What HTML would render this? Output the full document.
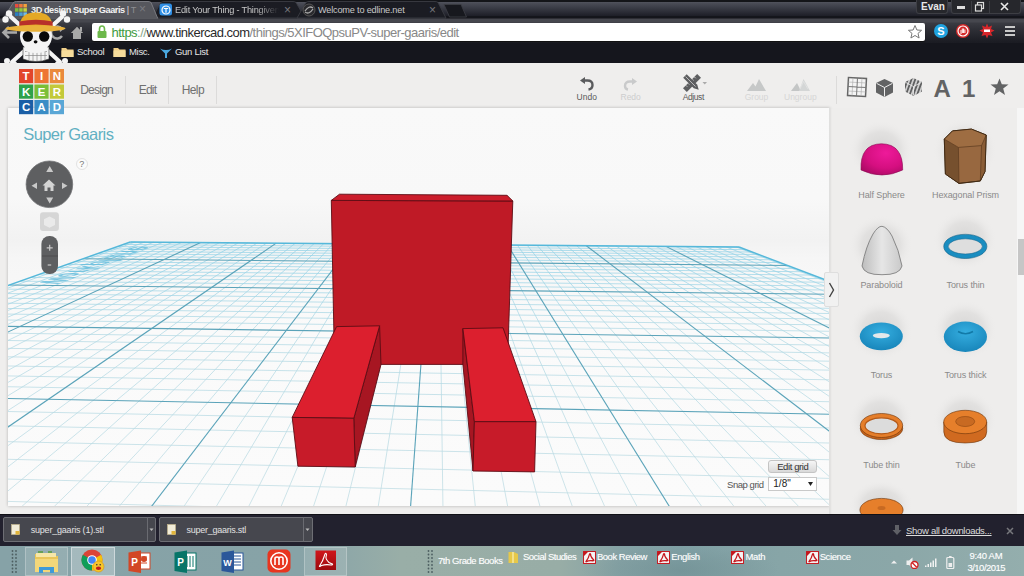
<!DOCTYPE html>
<html><head><meta charset="utf-8">
<style>
*{box-sizing:border-box;margin:0;padding:0}
html,body{width:1024px;height:576px;overflow:hidden;background:#1d1e24;font-family:"Liberation Sans",sans-serif}
.abs{position:absolute}
#tabs{left:0;top:0;width:1024px;height:18.5px;background:linear-gradient(#15161c 0,#15161c 1px,#5a5c66 1px,#4b4d57 3px,#393b45 8px,#1f2029 15.5px,#14151b 16.5px,#14151b 18.5px)}
#toolbar{left:0;top:18.5px;width:1024px;height:24.5px;background:linear-gradient(#46474e 0,#3c3d44 3px,#2d2e35 11px,#1e1f26 21px,#1a1b22 24.5px)}
#bm{left:0;top:43px;width:1024px;height:20px;background:#15161d}
#omni{left:92px;top:22.5px;width:833px;height:18.7px;background:#fff;border-radius:2px;box-shadow:0 1px 1px #111}
#tc{left:0;top:63px;width:1024px;height:450.5px;background:#efeeed}
#canvas{left:8px;top:108px;width:822px;height:398px;background:linear-gradient(#f9f9f9 0,#f8f8f8 90px,#f2f2f2 132px,#f6f6f6 150px,#fafafa 220px,#fbfbfb 398px);box-shadow:0 0 3px rgba(0,0,0,.25)}
#side{left:829px;top:108px;width:195px;height:405.5px;background:#eeedec;box-shadow:inset 3px 0 2px -1px rgba(0,0,0,.06)}
#dl{left:0;top:513.5px;width:1024px;height:32.5px;background:#22212e;border-top:1px solid #101016}
#task{left:0;top:545.7px;width:1024px;height:30.3px;background:linear-gradient(90deg,#86a2a7 0,#87a3a7 300px,#8fa8a8 350px,#99aea7 400px,#98ada6 560px,#85a2a5 620px,#7f9fa4 680px,#87a5a7 780px,#8ba7a8 900px,#94aead 1024px)}
svg{position:absolute;left:0;top:0}
.tt{font-size:9.2px;white-space:nowrap;letter-spacing:-0.2px}
.tx{font-size:12px}
.mn{top:82.5px;font-size:12px;color:#707070}
.sep{top:76px;width:1px;height:28px;background:#dcdbda}
.lb{top:91.5px;font-size:8.5px}
.sl{font-size:9px;color:#8a8a8a;text-align:center;letter-spacing:-0.1px}
.dli{top:517px;height:25px;background:#46474e;border:1px solid #6d6e74;border-radius:2px}
.dlt{top:524.5px;font-size:9px;color:#e2e2e2}
.tb{top:547px;height:29px;border:1px solid transparent}
.tk{font-size:9.5px;color:#fff;text-shadow:0 0 1px rgba(255,255,255,.4)}
.bt{font-size:9.5px;color:#e6e6e6;letter-spacing:-0.3px}
.m{stroke-width:0.75}
.M{stroke:#5aa3b9;stroke-width:1.1}
.E{stroke:#55b8da;stroke-width:1.5}
</style></head><body>
<div id="tabs" class="abs"></div>
<div id="toolbar" class="abs"></div>
<div class="abs" style="left:0;top:0;width:1024px;height:2px;background:#141519"></div>
<!-- active tab -->
<svg class="abs" width="1024" height="23" style="left:0;top:0">
<path d="M152 18 L161 2.5 Q162 1.5 164 1.5 L293 1.5 Q295 1.5 296 2.5 L305 18 Z" fill="#1b1c23" stroke="#3b3c43" stroke-width="0.9"/>
<path d="M297 18 L306 2.5 Q307 1.5 309 1.5 L435 1.5 Q437 1.5 438 2.5 L446 18 Z" fill="#1b1c23" stroke="#3b3c43" stroke-width="0.9"/>
<path d="M444 4.5 L461 4.5 L466.5 17 L449.5 17 Z" fill="#17181e" stroke="#3b3c43" stroke-width="0.9"/>
<path d="M3 19 L13.5 2.5 Q14.5 1.5 16.5 1.5 L148 1.5 Q150 1.5 151 2.5 L158 19 Z" fill="#56575d" stroke="#808187" stroke-width="0.9"/>
<rect x="0" y="18.5" width="1024" height="4" fill="#46474e"/>
</svg>
<!-- favicon -->
<svg class="abs" width="12" height="12" style="left:15px;top:4px">
<rect x="0" y="0" width="3.5" height="3.5" fill="#e84c3d"/><rect x="4.2" y="0" width="3.5" height="3.5" fill="#f0793a"/><rect x="8.4" y="0" width="3.5" height="3.5" fill="#f3a13b"/>
<rect x="0" y="4.2" width="3.5" height="3.5" fill="#7cba3e"/><rect x="4.2" y="4.2" width="3.5" height="3.5" fill="#93c83e"/><rect x="8.4" y="4.2" width="3.5" height="3.5" fill="#c6d63e"/>
<rect x="0" y="8.4" width="3.5" height="3.5" fill="#2a7fc0"/><rect x="4.2" y="8.4" width="3.5" height="3.5" fill="#4aa0d8"/><rect x="8.4" y="8.4" width="3.5" height="3.5" fill="#6fbde6"/>
</svg>
<div class="abs tt" style="left:31px;top:5px;color:#f2f2f2;font-weight:bold;letter-spacing:-0.45px">3D design Super Gaaris <span style="color:#ddd;font-weight:normal">|</span><span style="color:#8d8e92;font-weight:normal"> T</span></div>
<div class="abs tx" style="left:139px;top:2px;color:#7a7b80">&#215;</div>
<svg class="abs" width="14" height="14" style="left:159px;top:3px"><rect x="0.5" y="0.5" width="12.5" height="12" rx="2.5" fill="#2f8fe6"/><circle cx="7" cy="7" r="4" fill="none" stroke="#fff" stroke-width="1.2"/><path d="M4.8 5.5 H9.2 M7 5.5 V9.8" stroke="#fff" stroke-width="1.2"/></svg>
<div class="abs tt" style="left:175px;top:5px;color:#c8c8c8;width:104px;overflow:hidden;white-space:nowrap;-webkit-mask-image:linear-gradient(90deg,#000 78%,transparent)">Edit Your Thing - Thingiverse</div>
<div class="abs tx" style="left:284px;top:3px;color:#77787c">&#215;</div>
<svg class="abs" width="14" height="14" style="left:302px;top:3px"><circle cx="7" cy="7" r="6" fill="#2a2a2e" stroke="#555" stroke-width="1"/><path d="M3 8 Q7 2 11 5 M3 9 Q7 12 11 6" stroke="#aaa" stroke-width="1.3" fill="none"/></svg>
<div class="abs tt" style="left:318px;top:5px;color:#c8c8c8">Welcome to edline.net</div>
<div class="abs tx" style="left:429px;top:3px;color:#77787c">&#215;</div>
<!-- window controls -->
<div class="abs" style="left:916px;top:0;width:32px;height:14px;border:1px solid #3d3e44;border-top:0;border-radius:0 0 3px 3px;background:#26272c"></div>
<div class="abs" style="left:921px;top:1px;font:bold 10px 'Liberation Sans';color:#e8e8e8">Evan</div>
<div class="abs" style="left:951px;top:0;width:70px;height:14px;border:1px solid #3d3e44;border-top:0;border-radius:0 0 3px 3px;background:#26272c"></div>
<div class="abs" style="left:971px;top:1px;width:1px;height:12px;background:#3d3e44"></div>
<div class="abs" style="left:989px;top:1px;width:1px;height:12px;background:#3d3e44"></div>
<div class="abs" style="left:957px;top:6px;width:8px;height:3px;background:#ddd"></div>
<svg class="abs" width="12" height="12" style="left:974px;top:1px"><rect x="3.5" y="1.5" width="6" height="6" fill="none" stroke="#ddd" stroke-width="1.2"/><rect x="1.5" y="4" width="6" height="6" fill="#26272c" stroke="#ddd" stroke-width="1.2"/></svg>
<svg class="abs" width="12" height="12" style="left:999px;top:1px"><path d="M2 2 L9 9 M9 2 L2 9" stroke="#e8e8e8" stroke-width="1.6"/></svg>
<!-- omnibox -->
<div id="omni" class="abs"></div>
<svg class="abs" width="12" height="14" style="left:96px;top:25px"><path d="M3.5 6 V4 Q3.5 1 6 1 Q8.5 1 8.5 4 V6" fill="none" stroke="#6cb84a" stroke-width="1.6"/><rect x="1.5" y="6" width="9" height="7" rx="1" fill="#6cb84a"/></svg>
<div class="abs" style="left:111.5px;top:25px;font-size:13px;letter-spacing:-0.52px;white-space:nowrap;color:#888"><span style="color:#3e9a3e">https</span><span style="color:#8aa88a">://</span><span style="color:#2a2a2a">www.tinkercad.com</span>/things/5XIFOQpsuPV-super-gaaris/edit</div>
<svg class="abs" width="16" height="16" style="left:907px;top:24px"><path d="M8 1.5 L9.9 6 L14.6 6.3 L11 9.4 L12.1 14 L8 11.5 L3.9 14 L5 9.4 L1.4 6.3 L6.1 6 Z" fill="#fff" stroke="#777" stroke-width="1"/></svg>
<svg class="abs" width="16" height="16" style="left:933px;top:23px"><circle cx="8" cy="8" r="7" fill="#1fa3e0"/><text x="8" y="12" text-anchor="middle" font-family="Liberation Sans" font-weight="bold" font-size="11" fill="#fff">S</text></svg>
<svg class="abs" width="16" height="16" style="left:955px;top:23px"><circle cx="8" cy="8" r="7" fill="#d42a2a"/><circle cx="8" cy="8" r="5" fill="none" stroke="#fff" stroke-width="1.2"/><path d="M6 11 V7 M7.3 10 V5.5 M8.6 10 V5.5 M9.9 10 V6.5" stroke="#fff" stroke-width="1"/></svg>
<svg class="abs" width="16" height="16" style="left:979px;top:23px"><path d="M8 0.5 L9.5 4 L13 2.5 L12 6 L15.5 7.5 L12 9.5 L13.5 13 L9.5 12 L8 15.5 L6.5 12 L2.5 13 L4 9.5 L0.5 7.5 L4 6 L3 2.5 L6.5 4 Z" fill="#d8262a"/><rect x="5" y="6.5" width="6" height="2.5" fill="#fff"/></svg>
<svg class="abs" width="14" height="14" style="left:1003px;top:24px"><rect x="2" y="2" width="10" height="2" fill="#c9c9c9"/><rect x="2" y="6" width="10" height="2" fill="#c9c9c9"/><rect x="2" y="10" width="10" height="2" fill="#c9c9c9"/></svg>
<!-- nav icons -->
<svg class="abs" width="18" height="18" style="left:69px;top:24px"><path d="M2 9 L8 3 L14 9 M4 8 V15 H12 V8" fill="#9a9a9a"/><path d="M2 9 L8 3 L14 9 Z M4 8 H12 V15 H4 Z" fill="#a8a8a8"/><rect x="11" y="3" width="2" height="4" fill="#a8a8a8"/></svg>
<div id="bm" class="abs"></div>
<svg class="abs" width="14" height="12" style="left:61px;top:46px"><path d="M0.5 2 H5 L6.5 3.5 H12.5 V11 H0.5 Z" fill="#f1d08a"/><rect x="0.5" y="4.5" width="12" height="6.5" fill="#f6dc9c"/></svg>
<div class="abs bt" style="left:77px;top:46px">School</div>
<svg class="abs" width="14" height="12" style="left:113px;top:46px"><path d="M0.5 2 H5 L6.5 3.5 H12.5 V11 H0.5 Z" fill="#f1d08a"/><rect x="0.5" y="4.5" width="12" height="6.5" fill="#f6dc9c"/></svg>
<div class="abs bt" style="left:129px;top:46px">Misc.</div>
<svg class="abs" width="12" height="12" style="left:160px;top:47px"><path d="M0 1.5 Q3 3 6 3 Q9 3 12 1.5 L7 6.5 V11 H5 V6.5 Z" fill="#4aa8e0"/></svg>
<div class="abs bt" style="left:175px;top:46px">Gun List</div>

<svg class="abs" width="66" height="18" style="left:0;top:23px"><path d="M4 9.5 H17 M9 4 L3.5 9.5 L9 15" fill="none" stroke="#a9a9a9" stroke-width="2.6"/><path d="M62 6 A6 6 0 1 0 62 13" fill="none" stroke="#a9a9a9" stroke-width="2.4"/><path d="M59 3 L64.5 5.5 L60 9 Z" fill="#a9a9a9"/></svg>
<!-- skull -->
<svg class="abs" width="72" height="66" viewBox="0 8 72 66" style="left:0;top:8px">
<g stroke="#f4f4f4" stroke-width="4.2" stroke-linecap="round">
<line x1="11" y1="17" x2="60" y2="62"/>
<line x1="62" y1="17" x2="12" y2="62"/>
</g>
<g fill="#f4f4f4">
<circle cx="5.5" cy="19.5" r="3.2"/><circle cx="9" cy="13.5" r="3.2"/>
<circle cx="67" cy="19.5" r="3.2"/><circle cx="63" cy="13.5" r="3.2"/>
<circle cx="7" cy="61" r="3"/><circle cx="14" cy="64" r="3"/>
<circle cx="65" cy="61" r="3"/><circle cx="58" cy="64" r="3"/>
</g>
<path d="M23 47 H49 V59 Q36 64 23 59 Z" fill="#f4f4f4" stroke="#333" stroke-width="0.6"/>
<path d="M25 51.5 H47 M25 55.5 H47 M29 47 V60 M33 47 V61 M37 47 V61 M41 47 V61 M45 47 V60" stroke="#8a8a8a" stroke-width="0.7"/>
<circle cx="36" cy="36" r="16" fill="#f4f4f4"/>
<ellipse cx="36" cy="49" rx="12" ry="4" fill="#f4f4f4"/>
<path d="M19.5 27 Q20 12 36 12.5 Q52 12 52.5 27 Z" fill="#e4a824"/>
<path d="M19.3 21.5 Q36 18 52.6 21.5 L52.6 26 Q36 23 19.3 26 Z" fill="#b8302a"/>
<ellipse cx="35.5" cy="28.5" rx="30" ry="3.2" fill="#e9b23a"/>
<circle cx="27.8" cy="36.5" r="5.2" fill="#0a0a0a"/>
<circle cx="44.2" cy="36.5" r="5.2" fill="#0a0a0a"/>
<ellipse cx="35.6" cy="41.8" rx="1.9" ry="1.6" fill="#0a0a0a"/>
</svg>
<div id="tc" class="abs"></div>
<div id="canvas" class="abs">
<svg width="822" height="398" viewBox="8 108 822 398">
<defs><linearGradient id="gm" gradientUnits="userSpaceOnUse" x1="0" y1="240" x2="0" y2="506"><stop offset="0" stop-color="#8fd2e8"/><stop offset="0.35" stop-color="#b2d9e4"/><stop offset="1" stop-color="#bfdce3"/></linearGradient></defs><g stroke="url(#gm)"><line x1="-701.78" y1="545.12" x2="135.17" y2="241.99" class="m"/>
<line x1="-668.62" y1="546.14" x2="144.49" y2="242.07" class="m"/>
<line x1="-635.31" y1="547.16" x2="153.82" y2="242.15" class="m"/>
<line x1="-601.84" y1="548.18" x2="163.16" y2="242.22" class="m"/>
<line x1="-568.20" y1="549.21" x2="172.52" y2="242.30" class="m"/>
<line x1="-534.41" y1="550.24" x2="181.89" y2="242.38" class="m"/>
<line x1="-500.45" y1="551.28" x2="191.27" y2="242.46" class="m"/>
<line x1="-432.03" y1="553.37" x2="210.06" y2="242.61" class="m"/>
<line x1="-397.58" y1="554.43" x2="219.48" y2="242.69" class="m"/>
<line x1="-362.95" y1="555.49" x2="228.90" y2="242.77" class="m"/>
<line x1="-328.16" y1="556.55" x2="238.34" y2="242.85" class="m"/>
<line x1="-293.19" y1="557.62" x2="247.79" y2="242.92" class="m"/>
<line x1="-258.06" y1="558.70" x2="257.26" y2="243.00" class="m"/>
<line x1="-222.75" y1="559.78" x2="266.73" y2="243.08" class="m"/>
<line x1="-151.60" y1="561.95" x2="285.72" y2="243.24" class="m"/>
<line x1="-115.77" y1="563.05" x2="295.23" y2="243.32" class="m"/>
<line x1="-79.75" y1="564.15" x2="304.75" y2="243.39" class="m"/>
<line x1="-43.56" y1="565.26" x2="314.29" y2="243.47" class="m"/>
<line x1="-7.18" y1="566.37" x2="323.84" y2="243.55" class="m"/>
<line x1="29.37" y1="567.49" x2="333.40" y2="243.63" class="m"/>
<line x1="66.12" y1="568.61" x2="342.97" y2="243.71" class="m"/>
<line x1="140.16" y1="570.88" x2="362.15" y2="243.87" class="m"/>
<line x1="177.46" y1="572.02" x2="371.76" y2="243.95" class="m"/>
<line x1="214.95" y1="573.17" x2="381.38" y2="244.03" class="m"/>
<line x1="252.63" y1="574.32" x2="391.02" y2="244.11" class="m"/>
<line x1="290.50" y1="575.48" x2="400.66" y2="244.19" class="m"/>
<line x1="328.57" y1="576.64" x2="410.32" y2="244.27" class="m"/>
<line x1="366.83" y1="577.81" x2="420.00" y2="244.35" class="m"/>
<line x1="443.95" y1="580.17" x2="439.38" y2="244.51" class="m"/>
<line x1="482.81" y1="581.36" x2="449.08" y2="244.59" class="m"/>
<line x1="521.87" y1="582.55" x2="458.81" y2="244.67" class="m"/>
<line x1="561.13" y1="583.75" x2="468.54" y2="244.75" class="m"/>
<line x1="600.59" y1="584.96" x2="478.29" y2="244.83" class="m"/>
<line x1="640.27" y1="586.18" x2="488.05" y2="244.91" class="m"/>
<line x1="680.15" y1="587.40" x2="497.82" y2="244.99" class="m"/>
<line x1="760.54" y1="589.85" x2="517.40" y2="245.15" class="m"/>
<line x1="801.05" y1="591.09" x2="527.21" y2="245.23" class="m"/>
<line x1="841.78" y1="592.34" x2="537.03" y2="245.31" class="m"/>
<line x1="882.72" y1="593.59" x2="546.87" y2="245.40" class="m"/>
<line x1="923.88" y1="594.85" x2="556.72" y2="245.48" class="m"/>
<line x1="965.26" y1="596.12" x2="566.58" y2="245.56" class="m"/>
<line x1="1006.86" y1="597.39" x2="576.45" y2="245.64" class="m"/>
<line x1="1090.74" y1="599.96" x2="596.24" y2="245.80" class="m"/>
<line x1="1133.02" y1="601.25" x2="606.15" y2="245.89" class="m"/>
<line x1="1175.52" y1="602.55" x2="616.08" y2="245.97" class="m"/>
<line x1="1218.26" y1="603.86" x2="626.02" y2="246.05" class="m"/>
<line x1="1261.23" y1="605.17" x2="635.97" y2="246.13" class="m"/>
<line x1="1304.43" y1="606.49" x2="645.94" y2="246.22" class="m"/>
<line x1="1347.87" y1="607.82" x2="655.91" y2="246.30" class="m"/>
<line x1="1435.46" y1="610.50" x2="675.91" y2="246.46" class="m"/>
<line x1="1479.62" y1="611.85" x2="685.93" y2="246.55" class="m"/>
<line x1="1524.02" y1="613.21" x2="695.96" y2="246.63" class="m"/>
<line x1="1568.67" y1="614.58" x2="706.00" y2="246.71" class="m"/>
<line x1="1613.57" y1="615.95" x2="716.06" y2="246.80" class="m"/>
<line x1="1658.72" y1="617.33" x2="726.13" y2="246.88" class="m"/>
<line x1="1704.11" y1="618.72" x2="736.21" y2="246.96" class="m"/>
<line x1="-619.97" y1="509.31" x2="1590.03" y2="570.85" class="m"/>
<line x1="-556.44" y1="486.67" x2="1510.64" y2="540.64" class="m"/>
<line x1="-500.10" y1="466.60" x2="1441.48" y2="514.32" class="m"/>
<line x1="-449.81" y1="448.67" x2="1380.70" y2="491.19" class="m"/>
<line x1="-404.63" y1="432.58" x2="1326.86" y2="470.70" class="m"/>
<line x1="-363.83" y1="418.04" x2="1278.84" y2="452.42" class="m"/>
<line x1="-326.80" y1="404.84" x2="1235.74" y2="436.02" class="m"/>
<line x1="-262.14" y1="381.80" x2="1161.56" y2="407.79" class="m"/>
<line x1="-233.74" y1="371.68" x2="1129.41" y2="395.55" class="m"/>
<line x1="-207.56" y1="362.35" x2="1100.00" y2="384.36" class="m"/>
<line x1="-183.34" y1="353.72" x2="1072.98" y2="374.08" class="m"/>
<line x1="-160.87" y1="345.72" x2="1048.09" y2="364.61" class="m"/>
<line x1="-139.98" y1="338.27" x2="1025.07" y2="355.85" class="m"/>
<line x1="-120.49" y1="331.32" x2="1003.73" y2="347.72" class="m"/>
<line x1="-85.20" y1="318.75" x2="965.38" y2="333.13" class="m"/>
<line x1="-69.18" y1="313.04" x2="948.09" y2="326.55" class="m"/>
<line x1="-54.12" y1="307.67" x2="931.90" y2="320.39" class="m"/>
<line x1="-39.92" y1="302.61" x2="916.70" y2="314.60" class="m"/>
<line x1="-26.52" y1="297.84" x2="902.41" y2="309.17" class="m"/>
<line x1="-13.85" y1="293.32" x2="888.95" y2="304.04" class="m"/>
<line x1="-1.85" y1="289.05" x2="876.25" y2="299.21" class="m"/>
<line x1="20.33" y1="281.14" x2="852.87" y2="290.31" class="m"/>
<line x1="30.60" y1="277.48" x2="842.10" y2="286.21" class="m"/>
<line x1="40.38" y1="274.00" x2="831.87" y2="282.32" class="m"/>
<line x1="49.70" y1="270.68" x2="822.14" y2="278.62" class="m"/>
<line x1="58.59" y1="267.51" x2="812.88" y2="275.09" class="m"/>
<line x1="67.09" y1="264.48" x2="804.06" y2="271.74" class="m"/>
<line x1="75.21" y1="261.59" x2="795.65" y2="268.53" class="m"/>
<line x1="90.43" y1="256.17" x2="779.92" y2="262.55" class="m"/>
<line x1="97.57" y1="253.62" x2="772.57" y2="259.75" class="m"/>
<line x1="104.42" y1="251.18" x2="765.52" y2="257.07" class="m"/>
<line x1="111.01" y1="248.83" x2="758.77" y2="254.50" class="m"/>
<line x1="117.33" y1="246.58" x2="752.29" y2="252.03" class="m"/>
<line x1="123.42" y1="244.41" x2="746.06" y2="249.66" class="m"/>
<line x1="129.28" y1="242.32" x2="740.08" y2="247.39" class="m"/></g><g transform="matrix(0.5973 -0.2251 -0.8733 -0.0084 36.37 283.68)"><text x="0" y="0" font-family="Liberation Sans" font-size="36" fill="#62bcdc" font-weight="bold" opacity="0.8" textLength="165" lengthAdjust="spacingAndGlyphs">Workplane</text></g><line x1="-466.32" y1="552.33" x2="200.66" y2="242.53" class="M"/>
<line x1="-187.26" y1="560.86" x2="276.22" y2="243.16" class="M"/>
<line x1="103.04" y1="569.74" x2="352.55" y2="243.79" class="M"/>
<line x1="405.29" y1="578.99" x2="429.68" y2="244.43" class="M"/>
<line x1="720.24" y1="588.62" x2="507.60" y2="245.07" class="M"/>
<line x1="1048.69" y1="598.67" x2="586.34" y2="245.72" class="M"/>
<line x1="1391.55" y1="609.16" x2="665.90" y2="246.38" class="M"/>
<line x1="-692.18" y1="535.04" x2="1682.12" y2="605.90" class="M"/>
<line x1="-293.04" y1="392.81" x2="1196.84" y2="421.22" class="M"/>
<line x1="-102.27" y1="324.83" x2="983.88" y2="340.17" class="M"/>
<line x1="9.53" y1="284.99" x2="864.24" y2="294.64" class="M"/>
<line x1="82.98" y1="258.82" x2="787.61" y2="265.47" class="M"/>
<line x1="-718.99" y1="544.60" x2="130.32" y2="241.95" class="E"/>
<line x1="1716.83" y1="619.11" x2="739.02" y2="246.99" class="E"/>
<line x1="130.32" y1="241.95" x2="739.02" y2="246.99" class="E"/>
<g stroke="#5c0c14" stroke-width="0.9" stroke-linejoin="round">
<path d="M331.3 200.4 L512.8 201 L507.5 364.4 L334.5 364.4 Z" fill="#bf1a26"/>
<path d="M339.5 194.2 L507 195.3 L512.8 201 L331.3 200.4 Z" fill="#cb1d2b"/>
<path d="M379.6 325.8 L381 364.4 L355.2 467 L353.8 418.3 Z" fill="#a71622"/>
<path d="M336.6 326.6 L379.6 325.8 L353.8 418.3 L292.2 417.4 Z" fill="#dc1f2e"/>
<path d="M292.2 417.4 L353.8 418.3 L355.2 467 L297.9 466.2 Z" fill="#c71b29"/>
<path d="M462.9 328.6 L474.4 421.7 L473 471 L462.9 364.4 Z" fill="#a71622"/>
<path d="M462.9 328.6 L503 327.8 L536 421.7 L474.4 421.7 Z" fill="#dc1f2e"/>
<path d="M474.4 421.7 L536 421.7 L534.6 471.9 L473 471 Z" fill="#c71b29"/>
</g>
</svg>
</div>
<div id="side" class="abs"></div>
<div class="abs" style="left:1017px;top:108px;width:7px;height:405.5px;background:#f6f6f6"></div>
<div class="abs" style="left:1018px;top:238.7px;width:6px;height:36px;background:#c6c6c6"></div>
<div class="abs" style="left:824px;top:272px;width:15px;height:35px;background:#f1f1f1;border:1px solid #dedede;border-radius:2px"></div>
<svg class="abs" width="10" height="16" style="left:827px;top:282px"><path d="M2.5 1 L6.5 8 L2.5 15" fill="none" stroke="#444" stroke-width="1.4"/></svg>
<svg class="abs" width="195" height="406" style="left:829px;top:108px">
<defs>
<radialGradient id="sh" cx="0.5" cy="0.5" r="0.5"><stop offset="0" stop-color="#d6d5d4"/><stop offset="0.6" stop-color="#e2e1e0"/><stop offset="1" stop-color="#eeedec" stop-opacity="0"/></radialGradient>
<radialGradient id="mag" cx="0.6" cy="0.3" r="0.8"><stop offset="0" stop-color="#ee1a9a"/><stop offset="0.6" stop-color="#d50f80"/><stop offset="1" stop-color="#a80a62"/></radialGradient>
<linearGradient id="par" x1="0" y1="0" x2="1" y2="0"><stop offset="0" stop-color="#bdbdbd"/><stop offset="0.5" stop-color="#e6e6e6"/><stop offset="1" stop-color="#c9c9c9"/></linearGradient>
<radialGradient id="blu" cx="0.5" cy="0.35" r="0.7"><stop offset="0" stop-color="#35aee0"/><stop offset="1" stop-color="#1683b8"/></radialGradient>
</defs>
<g transform="translate(-829 -108)">
<ellipse cx="881" cy="150" rx="32" ry="30" fill="url(#sh)"/>
<ellipse cx="965" cy="150" rx="32" ry="32" fill="url(#sh)"/>
<ellipse cx="881" cy="245" rx="32" ry="30" fill="url(#sh)"/>
<ellipse cx="965" cy="240" rx="32" ry="30" fill="url(#sh)"/>
<ellipse cx="881" cy="330" rx="32" ry="30" fill="url(#sh)"/>
<ellipse cx="965" cy="330" rx="32" ry="30" fill="url(#sh)"/>
<ellipse cx="881" cy="420" rx="32" ry="30" fill="url(#sh)"/>
<ellipse cx="965" cy="420" rx="32" ry="30" fill="url(#sh)"/>
<ellipse cx="881" cy="505" rx="32" ry="25" fill="url(#sh)"/>
<!-- half sphere -->
<path d="M861 170 Q860 144 881.5 143.8 Q903 144 902.7 170 Q882 180 861 170 Z" fill="url(#mag)" stroke="#8a0a52" stroke-width="0.6"/>
<!-- hex prism -->
<path d="M944.3 139.1 L952.5 130.9 L971.4 129.1 L986.2 135 L985 171.6 L980.3 181 L959 183.4 L945.4 174 Z" fill="#986840" stroke="#3e2812" stroke-width="0.9"/>
<path d="M944.3 139.1 L958.4 147.4 L959 183.4 L945.4 174 Z" fill="#76502e"/>
<path d="M981.5 145.6 L986.2 135 L985 171.6 L980.3 181 Z" fill="#8a5d36"/>
<path d="M944.3 139.1 L952.5 130.9 L971.4 129.1 L986.2 135 L981.5 145.6 L958.4 147.4 Z" fill="#9e6d42"/>
<path d="M944.3 139.1 L958.4 147.4 L981.5 145.6 L986.2 135 M958.4 147.4 L959 183.4 M981.5 145.6 L980.3 181" fill="none" stroke="#5a3a1e" stroke-width="0.7"/>
<path d="M944.3 139.1 L952.5 130.9 L971.4 129.1 L986.2 135 L985 171.6 L980.3 181 L959 183.4 L945.4 174 Z" fill="none" stroke="#3e2812" stroke-width="0.9"/>
<!-- paraboloid -->
<path d="M862 266 Q866 246 873 234 Q878 226 882 226.3 Q887 227 892 236 Q899 250 902 266 Q900 275 882 274.7 Q864 275 862 266 Z" fill="url(#par)" stroke="#757575" stroke-width="0.8"/>
<!-- torus thin -->
<ellipse cx="965.3" cy="246.4" rx="19.3" ry="9.8" fill="#dedede" stroke="#1a8dc0" stroke-width="4.4"/>
<ellipse cx="965.3" cy="246.4" rx="21.6" ry="12.1" fill="none" stroke="#0f5f86" stroke-width="0.6"/>
<ellipse cx="965.3" cy="246.4" rx="17" ry="7.6" fill="none" stroke="#0f5f86" stroke-width="0.5"/>
<!-- torus -->
<ellipse cx="881.3" cy="336.4" rx="21.5" ry="13.9" fill="url(#blu)"/>
<ellipse cx="881.3" cy="335.6" rx="8.5" ry="2.6" fill="#e4e8ea"/>
<!-- torus thick -->
<ellipse cx="965.4" cy="336.8" rx="21.6" ry="15.2" fill="url(#blu)"/>
<path d="M958 331.5 Q965.5 336 973 331.5" fill="none" stroke="#127aa8" stroke-width="1.6"/>
<!-- tube thin -->
<ellipse cx="881.5" cy="428.5" rx="21.2" ry="11" fill="#c8641c" stroke="#6a3208" stroke-width="0.6"/>
<ellipse cx="881.5" cy="425.5" rx="21.2" ry="12" fill="#e57e2a" stroke="#6a3208" stroke-width="0.6"/>
<ellipse cx="881.5" cy="425.8" rx="16.5" ry="8" fill="#dcdcdc" stroke="#b55a18" stroke-width="1.2"/>
<!-- tube -->
<path d="M943.8 422 V432 Q944 443 965.2 443 Q986.5 443 986.7 432 V422 Z" fill="#d06a20" stroke="#6a3208" stroke-width="0.6"/>
<ellipse cx="965.2" cy="422" rx="21.5" ry="11.7" fill="#e67f2b" stroke="#6a3208" stroke-width="0.6"/>
<ellipse cx="965.2" cy="421.5" rx="9.5" ry="5" fill="#c86a22" stroke="#8a4410" stroke-width="0.6"/>
<!-- partial -->
<ellipse cx="881.5" cy="510" rx="21.6" ry="11.6" fill="#e67f2b" stroke="#6a3208" stroke-width="0.6"/>
<ellipse cx="881.5" cy="508" rx="4" ry="2" fill="#c86a22"/>
</g>
</svg>
<div class="abs sl" style="left:829px;top:190px;width:105px">Half Sphere</div>
<div class="abs sl" style="left:913px;top:190px;width:105px">Hexagonal Prism</div>
<div class="abs sl" style="left:829px;top:280px;width:105px">Paraboloid</div>
<div class="abs sl" style="left:913px;top:280px;width:105px">Torus thin</div>
<div class="abs sl" style="left:829px;top:370px;width:105px">Torus</div>
<div class="abs sl" style="left:913px;top:370px;width:105px">Torus thick</div>
<div class="abs sl" style="left:829px;top:460px;width:105px">Tube thin</div>
<div class="abs sl" style="left:913px;top:460px;width:105px">Tube</div>

<div class="abs" style="left:23.3px;top:125px;font-size:16.5px;letter-spacing:-0.6px;color:#62b0c2">Super Gaaris</div>
<svg class="abs" width="60" height="120" style="left:20px;top:156px">
<circle cx="29.4" cy="28.3" r="23.3" fill="#5e5f61" stroke="#747577" stroke-width="0.8"/>
<path d="M29.7 10 L33.2 16 H26.2 Z M29.7 47.5 L33.2 41.5 H26.2 Z M11.5 29.8 L17 26.5 V33.1 Z M47.5 29.8 L42 26.5 V33.1 Z" fill="#c9c9c9"/>
<path d="M22.5 29.5 L29 23.5 L35.5 29.5 H33.5 V35 H30.5 V31.5 H27.5 V35 H24.5 V29.5 Z" fill="#d4d4d4"/>
<rect x="20" y="56.2" width="18.9" height="18.9" rx="3" fill="#d6d6d6"/>
<path d="M29.5 60.5 L35 63.3 V69 L29.5 71.8 L24 69 V63.3 Z" fill="#eaeaea"/>
<rect x="21.4" y="80" width="16.6" height="38" rx="8" fill="#5e5f61"/>
<line x1="22" y1="100" x2="38" y2="100" stroke="#4c4d4f" stroke-width="1"/>
<path d="M26.7 91.8 H32.7 M29.7 88.8 V94.8" stroke="#c9c9c9" stroke-width="1.2"/>
<path d="M27.7 109 H31.2" stroke="#c9c9c9" stroke-width="1.2"/>
</svg>
<div class="abs" style="left:75.7px;top:157.9px;width:12px;height:12px;border-radius:50%;background:#fbfbfb;border:1px solid #e2e2e2;font-size:9px;color:#777;text-align:center;line-height:10px">?</div>
<div class="abs" style="left:768.3px;top:459.7px;width:49px;height:13px;border-radius:3px;border:1px solid #c4c4c4;background:linear-gradient(#f6f6f6,#d9d9d9);font-size:9.5px;letter-spacing:-0.4px;color:#333;text-align:center;line-height:11px">Edit grid</div>
<div class="abs" style="left:727px;top:479px;font-size:9.5px;letter-spacing:-0.45px;color:#555">Snap grid</div>
<div class="abs" style="left:768.3px;top:477.4px;width:49px;height:13.5px;border:1px solid #c9c9c9;background:#fff;font-size:10px;color:#222;line-height:11.5px;padding-left:4px">1/8"</div>
<svg class="abs" width="6" height="5" style="left:808px;top:482px"><path d="M0 0 H5 L2.5 4 Z" fill="#222"/></svg>

<!-- logo -->
<svg class="abs" width="46" height="46" style="left:18.8px;top:68.8px" font-family="Liberation Sans" font-weight="bold" font-size="11.5" text-anchor="middle" fill="#fff">
<rect x="0" y="0" width="14.2" height="14.2" fill="#e2452b"/><rect x="15.4" y="0" width="14.2" height="14.2" fill="#ee7434"/><rect x="30.8" y="0" width="14.2" height="14.2" fill="#ea8a3c"/>
<rect x="0" y="15.5" width="14.2" height="14.2" fill="#2fa24a"/><rect x="15.4" y="15.5" width="14.2" height="14.2" fill="#7bbf37"/><rect x="30.8" y="15.5" width="14.2" height="14.2" fill="#c3c93a"/>
<rect x="0" y="31" width="14.2" height="14.2" fill="#1b5fa6"/><rect x="15.4" y="31" width="14.2" height="14.2" fill="#3a8dc6"/><rect x="30.8" y="31" width="14.2" height="14.2" fill="#5aa7d6"/>
<text x="7.1" y="11.3">T</text><text x="22.5" y="11.3">I</text><text x="37.9" y="11.3">N</text>
<text x="7.1" y="26.8">K</text><text x="22.5" y="26.8">E</text><text x="37.9" y="26.8">R</text>
<text x="7.1" y="42.3">C</text><text x="22.5" y="42.3">A</text><text x="37.9" y="42.3">D</text>
</svg>
<div class="abs mn" style="left:80.2px;letter-spacing:-0.75px">Design</div>
<div class="abs mn" style="left:138.7px;letter-spacing:-0.8px">Edit</div>
<div class="abs mn" style="left:181.7px;letter-spacing:-0.6px">Help</div>
<div class="abs sep" style="left:125px"></div>
<div class="abs sep" style="left:168px"></div>
<div class="abs sep" style="left:216px"></div>
<div class="abs sep" style="left:836px"></div>
<!-- toolbar icons -->
<svg class="abs" width="16" height="14" style="left:579px;top:77px"><path d="M4 3.5 H8.5 Q13.5 3.5 13.5 8 Q13.5 12 9.5 12.5" fill="none" stroke="#5a5b5d" stroke-width="2.4"/><path d="M1 3.5 L6 0 V7 Z" fill="#5a5b5d"/></svg>
<div class="abs lb" style="left:576.6px;color:#5a5a5a">Undo</div>
<svg class="abs" width="16" height="14" style="left:622px;top:77px"><path d="M12 4.5 H8 Q3 4.5 3 9 Q3 12 6 12.5" fill="none" stroke="#c9cacb" stroke-width="2.4"/><path d="M15 4.5 L10 1 V8 Z" fill="#c9cacb"/></svg>
<div class="abs lb" style="left:620.5px;color:#cdcdcd">Redo</div>
<svg class="abs" width="26" height="18" style="left:683px;top:74px">
<g transform="rotate(45 9 9)"><rect x="6.3" y="-1" width="5.4" height="20" fill="#5d5e60"/><path d="M6.3 3 h2 M6.3 6 h2 M6.3 9 h2 M6.3 12 h2 M6.3 15 h2" stroke="#efeeed" stroke-width="0.7"/></g>
<g transform="rotate(-45 9 9)"><path d="M6.5 -1 H11.5 V14 L9 18.5 L6.5 14 Z" fill="#5d5e60"/><line x1="9" y1="0" x2="9" y2="14" stroke="#efeeed" stroke-width="0.6"/></g>
<path d="M19.5 8 H24 L21.75 10.5 Z" fill="#aaa"/>
</svg>
<div class="abs lb" style="left:682.7px;color:#5a5a5a;letter-spacing:-0.4px">Adjust</div>
<svg class="abs" width="20" height="13" style="left:747px;top:78.5px"><path d="M0 12 L6 4 L8.5 7.5 L12 0 L19 12 Z" fill="#c6c8c8"/></svg>
<div class="abs lb" style="left:744.7px;color:#d6d6d6">Group</div>
<svg class="abs" width="20" height="13" style="left:790.5px;top:78.5px"><path d="M0 12 L6 4 L10 12 Z" fill="#c4c6c6"/><path d="M8 12 L12.5 0 L19 12 Z" fill="#d4d6d6"/><path d="M9 10 L12.5 2.5 L17 10" fill="none" stroke="#e4e4e4" stroke-width="0.8"/></svg>
<div class="abs lb" style="left:784px;color:#d6d6d6">Ungroup</div>
<!-- view icons -->
<svg class="abs" width="22" height="22" style="left:845.5px;top:76px"><g transform="rotate(3 11 11)"><rect x="2" y="2" width="18" height="18" fill="#f4f4f4" stroke="#666" stroke-width="1.5"/><path d="M6.5 2 V20 M15.5 2 V20 M2 6.5 H20 M2 15.5 H20" stroke="#aaa" stroke-width="0.6"/><path d="M11 2 V20 M2 11 H20" stroke="#777" stroke-width="1"/></g></svg>
<svg class="abs" width="20" height="20" style="left:875px;top:77.5px"><path d="M9.5 1 L18 5 V14.5 L9.5 19 L1 14.5 V5 Z" fill="#626364"/><path d="M1.5 5.3 L9.5 9.5 L17.5 5.3 M9.5 9.5 V18.5" fill="none" stroke="#eee" stroke-width="1"/></svg>
<svg class="abs" width="20" height="20" style="left:904px;top:77px"><defs><pattern id="st" width="3.5" height="20" patternUnits="userSpaceOnUse" patternTransform="rotate(20)"><rect width="2" height="20" fill="#5f6061"/><rect x="2" width="1.5" height="20" fill="#cfcfcf"/></pattern></defs><path d="M9.5 1 L18 5 V14.5 L9.5 19 L1 14.5 V5 Z" fill="url(#st)"/><path d="M1.5 5.3 L9.5 9.5 L17.5 5.3 M9.5 9.5 V18.5" fill="none" stroke="#eee" stroke-width="0.8"/></svg>
<div class="abs" style="left:933.6px;top:74.5px;font:bold 24px 'Liberation Sans';color:#626364">A</div>
<div class="abs" style="left:962px;top:74.5px;font:bold 24px 'Liberation Sans';color:#626364">1</div>
<svg class="abs" width="20" height="18" style="left:989.5px;top:77.5px"><path d="M9.5 0.5 L11.8 6.2 L18.5 6.5 L13.2 10.5 L15 17 L9.5 13.3 L4 17 L5.8 10.5 L0.5 6.5 L7.2 6.2 Z" fill="#626364"/></svg>


<div id="dl" class="abs"></div>
<div class="abs dli" style="left:3px;width:153px"></div>
<div class="abs" style="left:146.5px;top:517px;width:1px;height:25px;background:#6a6b71"></div>
<svg class="abs" width="6" height="4" style="left:149px;top:528px"><path d="M0.5 0.5 H4.5 L2.5 3 Z" fill="#bbb"/></svg>
<svg class="abs" width="10" height="12" style="left:11px;top:523.5px"><rect x="0.5" y="0.5" width="8" height="10" fill="#f1ecd8" stroke="#c9b98a" stroke-width="0.6"/><rect x="4.5" y="7" width="4" height="3.5" fill="#e2b53a"/></svg>
<div class="abs dlt" style="left:30.7px;letter-spacing:-0.2px">super_gaaris (1).stl</div>
<div class="abs dli" style="left:159px;width:153.6px"></div>
<div class="abs" style="left:302.5px;top:517px;width:1px;height:25px;background:#6a6b71"></div>
<svg class="abs" width="6" height="4" style="left:305px;top:528px"><path d="M0.5 0.5 H4.5 L2.5 3 Z" fill="#bbb"/></svg>
<svg class="abs" width="10" height="12" style="left:167px;top:523.5px"><rect x="0.5" y="0.5" width="8" height="10" fill="#f1ecd8" stroke="#c9b98a" stroke-width="0.6"/><rect x="4.5" y="7" width="4" height="3.5" fill="#e2b53a"/></svg>
<div class="abs dlt" style="left:186.5px;letter-spacing:-0.25px">super_gaaris.stl</div>
<svg class="abs" width="10" height="11" style="left:892px;top:524.5px"><path d="M3 0 H7 V5 H9.5 L5 10 L0.5 5 H3 Z" fill="#5f6066"/></svg>
<div class="abs" style="left:906px;top:524.5px;font-size:9.5px;letter-spacing:-0.3px;color:#dcdcdc;text-decoration:underline">Show all downloads...</div>
<svg class="abs" width="8" height="8" style="left:1006px;top:526.5px"><path d="M1 1 L7 7 M7 1 L1 7" stroke="#77787d" stroke-width="1.5"/></svg>
<div id="task" class="abs"></div>
<div class="abs" style="left:580px;top:546px;width:200px;height:30px;background:radial-gradient(ellipse at 50% 80%,rgba(100,130,132,.35),rgba(0,0,0,0) 70%)"></div>
<svg class="abs" width="8" height="26" style="left:10.7px;top:549px"><g fill="#4d5f61"><circle cx="1.5" cy="2" r="0.9"/><circle cx="5" cy="2" r="0.9"/><circle cx="1.5" cy="5.5" r="0.9"/><circle cx="5" cy="5.5" r="0.9"/><circle cx="1.5" cy="9" r="0.9"/><circle cx="5" cy="9" r="0.9"/><circle cx="1.5" cy="12.5" r="0.9"/><circle cx="5" cy="12.5" r="0.9"/><circle cx="1.5" cy="16" r="0.9"/><circle cx="5" cy="16" r="0.9"/><circle cx="1.5" cy="19.5" r="0.9"/><circle cx="5" cy="19.5" r="0.9"/><circle cx="1.5" cy="23" r="0.9"/><circle cx="5" cy="23" r="0.9"/></g></svg>
<div class="abs tb" style="left:25px;width:43.4px;background:rgba(255,255,255,.12);border-color:rgba(255,255,255,.25)"></div>
<div class="abs tb" style="left:70.7px;width:44px;background:rgba(255,255,255,.25);border-color:rgba(255,255,255,.45)"></div>
<div class="abs tb" style="left:303.5px;width:43.4px;background:rgba(255,255,255,.12);border-color:rgba(255,255,255,.25)"></div>
<!-- explorer -->
<svg class="abs" width="26" height="24" style="left:33.5px;top:550px"><path d="M1 4 H9 L11 6 H24 V22 H1 Z" fill="#e9c65a"/><rect x="2" y="3" width="20" height="4" fill="#f6e7a8"/><path d="M4 2 h5 M14 2 h4" stroke="#5a9a3a" stroke-width="1.5"/><path d="M1 9 H24 V22 H1 Z" fill="#f3d77a"/><path d="M5 17 H20 V23 H16 V20 H9 V23 H5 Z" fill="#3f9ad8"/></svg>
<!-- chrome -->
<svg class="abs" width="24" height="24" style="left:81px;top:549px"><circle cx="11" cy="11" r="10.5" fill="#db4437"/><path d="M11 11 L20.1 5.75 A10.5 10.5 0 0 1 11 21.5 Z" fill="#f4c20d"/><path d="M11 11 L11 21.5 A10.5 10.5 0 0 1 1.9 5.75 Z" fill="#0f9d58"/><circle cx="11" cy="11" r="4.8" fill="#fff"/><circle cx="11" cy="11" r="3.8" fill="#4285f4"/><circle cx="17.5" cy="17.5" r="5.5" fill="#f7c52a" stroke="#c88a10" stroke-width="0.5"/><ellipse cx="17.5" cy="19.3" rx="2.7" ry="1.8" fill="#c0201a"/><circle cx="15.8" cy="15.8" r="0.8" fill="#333"/><circle cx="19.2" cy="15.8" r="0.8" fill="#333"/></svg>
<!-- ppt -->
<svg class="abs" width="24" height="24" style="left:127.5px;top:549.5px"><rect x="9" y="3" width="13" height="16" fill="#fff" stroke="#d24726" stroke-width="1"/><path d="M12 7 h7 M12 10 h7 M12 13 h7" stroke="#d24726" stroke-width="1"/><circle cx="16" cy="9" r="3" fill="#d24726"/><path d="M0.5 2.5 L13 0.5 V23 L0.5 21 Z" fill="#d24726"/><text x="6.5" y="16" text-anchor="middle" font-family="Liberation Sans" font-weight="bold" font-size="10" fill="#fff">P</text></svg>
<!-- publisher -->
<svg class="abs" width="24" height="24" style="left:174px;top:549.5px"><rect x="10" y="3" width="12" height="17" fill="#fff" stroke="#077568" stroke-width="1"/><path d="M13 6 v11 M16 6 v11 M19 6 v11" stroke="#077568" stroke-width="1"/><path d="M0.5 2.5 L13 0.5 V23 L0.5 21 Z" fill="#077568"/><text x="6.5" y="16" text-anchor="middle" font-family="Liberation Sans" font-weight="bold" font-size="10" fill="#fff">P</text></svg>
<!-- word -->
<svg class="abs" width="24" height="24" style="left:220.5px;top:549.5px"><rect x="10" y="3" width="12" height="17" fill="#fff" stroke="#2b579a" stroke-width="1"/><path d="M13 6 h7 M13 9 h7 M13 12 h7 M13 15 h7" stroke="#2b579a" stroke-width="1"/><path d="M0.5 2.5 L13 0.5 V23 L0.5 21 Z" fill="#2b579a"/><text x="6.5" y="15.5" text-anchor="middle" font-family="Liberation Sans" font-weight="bold" font-size="9" fill="#fff">W</text></svg>
<!-- makerbot -->
<svg class="abs" width="24" height="24" style="left:267.4px;top:549px"><rect x="0.5" y="0.5" width="23" height="23" rx="5" fill="#e8351f"/><circle cx="12" cy="12" r="8.2" fill="none" stroke="#fff" stroke-width="1.6"/><path d="M8 16 V9.5 Q8 8 10 8 Q12 8 12 9.5 V16 M12 9.5 Q12 8 14 8 Q16 8 16 9.5 V16" fill="none" stroke="#fff" stroke-width="1.6"/></svg>
<!-- acrobat -->
<svg class="abs" width="22" height="22" style="left:314.8px;top:549.5px"><defs><linearGradient id="acr" x1="0" y1="0" x2="0" y2="1"><stop offset="0" stop-color="#d0161b"/><stop offset="1" stop-color="#9c0a0e"/></linearGradient></defs><rect x="0.5" y="0.5" width="20.5" height="19.5" fill="url(#acr)"/><path d="M4.5 16 Q8 11 9.5 5.5 Q10 3 11 3.5 Q12 4.5 11 7 Q10.5 9 14 12.5 Q17 14 17.5 14 Q18 15 16 15 Q11 14 6.5 15.5 Q4 17 4.5 16 Z" fill="none" stroke="#fff" stroke-width="1.1"/></svg>
<svg class="abs" width="8" height="26" style="left:427px;top:549px"><g fill="#4d5f61"><circle cx="1.5" cy="2" r="0.9"/><circle cx="5" cy="2" r="0.9"/><circle cx="1.5" cy="5.5" r="0.9"/><circle cx="5" cy="5.5" r="0.9"/><circle cx="1.5" cy="9" r="0.9"/><circle cx="5" cy="9" r="0.9"/><circle cx="1.5" cy="12.5" r="0.9"/><circle cx="5" cy="12.5" r="0.9"/><circle cx="1.5" cy="16" r="0.9"/><circle cx="5" cy="16" r="0.9"/><circle cx="1.5" cy="19.5" r="0.9"/><circle cx="5" cy="19.5" r="0.9"/><circle cx="1.5" cy="23" r="0.9"/><circle cx="5" cy="23" r="0.9"/></g></svg>
<div class="abs tk" style="left:438px;top:554.5px;letter-spacing:-0.45px">7th Grade Books</div>
<svg class="abs" width="11" height="13" style="left:508px;top:550.5px"><path d="M0.5 1 H6 L10 3 V12 H0.5 Z" fill="#e6c84a"/><rect x="4" y="1" width="2" height="11" fill="#f3e08a"/></svg>
<div class="abs tk" style="left:523px;top:550.5px;letter-spacing:-0.5px">Social Studies</div>
<svg class="abs pdf" width="13" height="13" viewBox="0 0 12 12" style="left:582.6px;top:550.5px"><rect x="0.5" y="0.5" width="11" height="11" fill="#f6f6f6" stroke="#c4161c" stroke-width="0.9"/><path d="M0.5 0.5 H5 L0.5 5 Z" fill="#c4161c"/><path d="M2.5 10 Q5.5 6 6 3 Q6.5 1.8 7 3 Q6.8 5 9.8 8.2 Q10.5 9 9 9 Q6 8.3 2.5 10 Z" fill="none" stroke="#c4161c" stroke-width="1.2"/></svg>
<div class="abs tk" style="left:597px;top:550.5px;letter-spacing:-0.5px">Book Review</div>
<svg class="abs pdf" width="13" height="13" viewBox="0 0 12 12" style="left:656.6px;top:550.5px"><rect x="0.5" y="0.5" width="11" height="11" fill="#f6f6f6" stroke="#c4161c" stroke-width="0.9"/><path d="M0.5 0.5 H5 L0.5 5 Z" fill="#c4161c"/><path d="M2.5 10 Q5.5 6 6 3 Q6.5 1.8 7 3 Q6.8 5 9.8 8.2 Q10.5 9 9 9 Q6 8.3 2.5 10 Z" fill="none" stroke="#c4161c" stroke-width="1.2"/></svg>
<div class="abs tk" style="left:671.3px;top:550.5px;letter-spacing:-0.4px">English</div>
<svg class="abs pdf" width="13" height="13" viewBox="0 0 12 12" style="left:730.9px;top:550.5px"><rect x="0.5" y="0.5" width="11" height="11" fill="#f6f6f6" stroke="#c4161c" stroke-width="0.9"/><path d="M0.5 0.5 H5 L0.5 5 Z" fill="#c4161c"/><path d="M2.5 10 Q5.5 6 6 3 Q6.5 1.8 7 3 Q6.8 5 9.8 8.2 Q10.5 9 9 9 Q6 8.3 2.5 10 Z" fill="none" stroke="#c4161c" stroke-width="1.2"/></svg>
<div class="abs tk" style="left:745.5px;top:550.5px;letter-spacing:-0.4px">Math</div>
<svg class="abs pdf" width="13" height="13" viewBox="0 0 12 12" style="left:805.5px;top:550.5px"><rect x="0.5" y="0.5" width="11" height="11" fill="#f6f6f6" stroke="#c4161c" stroke-width="0.9"/><path d="M0.5 0.5 H5 L0.5 5 Z" fill="#c4161c"/><path d="M2.5 10 Q5.5 6 6 3 Q6.5 1.8 7 3 Q6.8 5 9.8 8.2 Q10.5 9 9 9 Q6 8.3 2.5 10 Z" fill="none" stroke="#c4161c" stroke-width="1.2"/></svg>
<div class="abs tk" style="left:819.7px;top:550.5px;letter-spacing:-0.4px">Science</div>
<svg class="abs" width="6" height="4" style="left:891px;top:560px"><path d="M0 3.5 L3 0.5 L6 3.5 Z" fill="#f0f0f0"/></svg>
<svg class="abs" width="13" height="12" style="left:906px;top:557px"><path d="M0.5 3.5 H3 L6.5 0.5 V11 L3 8 H0.5 Z" fill="#eee"/><circle cx="8.5" cy="8" r="3.5" fill="#fff" stroke="#d02020" stroke-width="1.3"/><path d="M6.3 5.8 L10.7 10.2" stroke="#d02020" stroke-width="1.3"/></svg>
<svg class="abs" width="13" height="10" style="left:924px;top:557.5px"><path d="M1 9 h1.5 v-1.5 h-1.5 z M3.5 9 h1.5 v-3 h-1.5 z M6 9 h1.5 v-4.5 h-1.5 z M8.5 9 h1.5 v-6.5 h-1.5 z M11 9 h1.5 v-8.5 h-1.5 z" fill="#f2f2f2"/></svg>
<svg class="abs" width="9" height="13" style="left:946px;top:555.5px"><rect x="0.8" y="1.5" width="7" height="11" rx="1" fill="none" stroke="#eee" stroke-width="1.2"/><rect x="3" y="0" width="2.6" height="1.5" fill="#eee"/><rect x="2.5" y="7" width="3.6" height="4" fill="#eee"/></svg>
<div class="abs tk" style="left:969.5px;top:549.5px;letter-spacing:-0.3px">9:40 AM</div>
<div class="abs tk" style="left:967.4px;top:561.8px;letter-spacing:-0.5px">3/10/2015</div>

</body></html>
